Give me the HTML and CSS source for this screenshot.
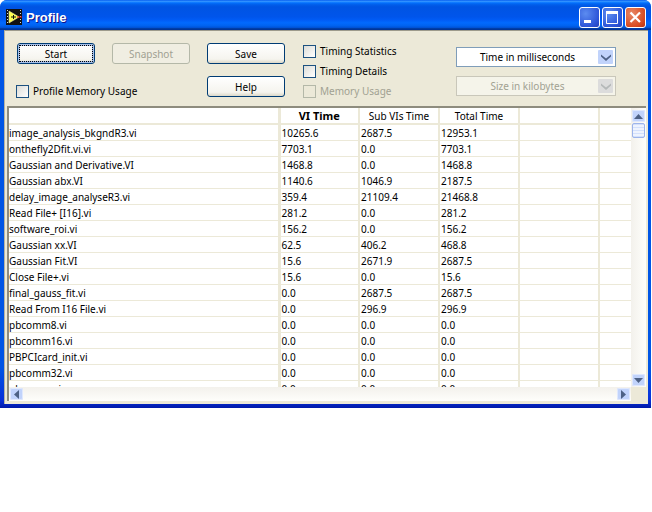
FILE: index.html
```html
<!DOCTYPE html>
<html lang="en">
<head>
    <meta charset="UTF-8">
    <title>Profile</title>
    <link rel="stylesheet" href="styles.css">
</head>
<body>
    <div class="window">
        <div class="titlebar">
            <svg class="app-icon" width="16" height="16" viewBox="0 0 16 16">
                <rect width="16" height="16" fill="#111"/>
                <path d="M1 1h1v1H1zM1 4h1v1H1zM1 7h1v1H1zM1 10h1v1H1zM1 13h1v1H1zM14 1h1v1h-1zM14 4h1v1h-1zM14 7h1v1h-1zM14 10h1v1h-1zM14 13h1v1h-1z" fill="#ddd"/>
                <path d="M3 2L13 8L3 14Z" fill="#ffff50" stroke="#e8e8a0" stroke-width="0.6"/>
                <path d="M5 8h5M7.500 6v4" stroke="#111" stroke-width="1"/>
                <path d="M11 8h5" stroke="#f01818" stroke-width="1"/>
            </svg>
            <span class="title">Profile</span>
            <div class="win-buttons">
                <div class="win-btn blue"><svg width="21" height="21" viewBox="0 0 21 21"><rect x="5" y="13" width="7" height="3" fill="#fff"/></svg></div>
                <div class="win-btn blue"><svg width="21" height="21" viewBox="0 0 21 21"><path d="M4.500 4.500h11v12h-11z" fill="none" stroke="#fff"/><rect x="4" y="4" width="12" height="3" fill="#fff"/></svg></div>
                <div class="win-btn red"><svg width="21" height="21" viewBox="0 0 21 21"><path d="M5.500 5.500L15 15M15 5.500L5.500 15" stroke="#fff" stroke-width="2.200"/></svg></div>
            </div>
        </div>
        <div class="content">
            <div class="toolbar">
                <div class="col-start">
                    <div class="btn-row">
                        <button class="btn focused">Start</button>
                        <button class="btn disabled">Snapshot</button>
                    </div>
                    <label class="check"><span class="box"></span>Profile Memory Usage</label>
                </div>
                <div class="col-save">
                    <button class="btn">Save</button>
                    <button class="btn">Help</button>
                </div>
                <div class="col-checks">
                    <label class="check"><span class="box"></span>Timing Statistics</label>
                    <label class="check"><span class="box"></span>Timing Details</label>
                    <label class="check disabled"><span class="box"></span>Memory Usage</label>
                </div>
                <div class="col-selects">
                    <div class="select"><span class="select-text">Time in milliseconds</span><span class="drop"><svg width="10" height="7" viewBox="0 0 10 7"><path d="M0 0.500L5 4.500L10 0.500V2.500L5 7L0 2.500Z" fill="#4d6185"/></svg></span></div>
                    <div class="select disabled"><span class="select-text">Size in kilobytes</span><span class="drop"><svg width="10" height="7" viewBox="0 0 10 7"><path d="M0 0.500L5 4.500L10 0.500V2.500L5 7L0 2.500Z" fill="#b4b8b8"/></svg></span></div>
                </div>
            </div>
            <div class="panel">
                <div class="table-row">
                    <div class="table-clip">
                        <table class="grid">
                            <colgroup><col class="c-name"><col class="c-num"><col class="c-num"><col class="c-num"><col class="c-num"><col class="c-num"></colgroup>
                            <thead>
                                <tr><th></th><th class="strong">VI Time</th><th>Sub VIs Time</th><th>Total Time</th><th></th><th></th></tr>
                            </thead>
                            <tbody>
                                <tr><td>image_analysis_bkgndR3.vi</td><td>10265.6</td><td>2687.5</td><td>12953.1</td><td></td><td></td></tr>
                                <tr><td>onthefly2Dfit.vi.vi</td><td>7703.1</td><td>0.0</td><td>7703.1</td><td></td><td></td></tr>
                                <tr><td>Gaussian and Derivative.VI</td><td>1468.8</td><td>0.0</td><td>1468.8</td><td></td><td></td></tr>
                                <tr><td>Gaussian abx.VI</td><td>1140.6</td><td>1046.9</td><td>2187.5</td><td></td><td></td></tr>
                                <tr><td>delay_image_analyseR3.vi</td><td>359.4</td><td>21109.4</td><td>21468.8</td><td></td><td></td></tr>
                                <tr><td>Read File+ [I16].vi</td><td>281.2</td><td>0.0</td><td>281.2</td><td></td><td></td></tr>
                                <tr><td>software_roi.vi</td><td>156.2</td><td>0.0</td><td>156.2</td><td></td><td></td></tr>
                                <tr><td>Gaussian xx.VI</td><td>62.5</td><td>406.2</td><td>468.8</td><td></td><td></td></tr>
                                <tr><td>Gaussian Fit.VI</td><td>15.6</td><td>2671.9</td><td>2687.5</td><td></td><td></td></tr>
                                <tr><td>Close File+.vi</td><td>15.6</td><td>0.0</td><td>15.6</td><td></td><td></td></tr>
                                <tr><td>final_gauss_fit.vi</td><td>0.0</td><td>2687.5</td><td>2687.5</td><td></td><td></td></tr>
                                <tr><td>Read From I16 File.vi</td><td>0.0</td><td>296.9</td><td>296.9</td><td></td><td></td></tr>
                                <tr><td>pbcomm8.vi</td><td>0.0</td><td>0.0</td><td>0.0</td><td></td><td></td></tr>
                                <tr><td>pbcomm16.vi</td><td>0.0</td><td>0.0</td><td>0.0</td><td></td><td></td></tr>
                                <tr><td>PBPCIcard_init.vi</td><td>0.0</td><td>0.0</td><td>0.0</td><td></td><td></td></tr>
                                <tr><td>pbcomm32.vi</td><td>0.0</td><td>0.0</td><td>0.0</td><td></td><td></td></tr>
                                <tr><td>pbcomm.vi</td><td>0.0</td><td>0.0</td><td>0.0</td><td></td><td></td></tr>
                            </tbody>
                        </table>
                    </div>
                    <div class="vscroll">
                        <span class="arrow"><svg width="9" height="5" viewBox="0 0 9 5"><path d="M4.500 0L9 5H0Z" fill="#4d6185"/></svg></span>
                        <span class="thumb"></span>
                        <span class="spacer"></span>
                        <span class="arrow"><svg width="9" height="5" viewBox="0 0 9 5"><path d="M4.500 5L9 0H0Z" fill="#4d6185"/></svg></span>
                    </div>
                </div>
                <div class="hscroll">
                    <span class="arrow"><svg width="5" height="9" viewBox="0 0 5 9"><path d="M0 4.500L5 0V9Z" fill="#4d6185"/></svg></span>
                    <span class="spacer"></span>
                    <span class="arrow"><svg width="5" height="9" viewBox="0 0 5 9"><path d="M5 4.500L0 0V9Z" fill="#4d6185"/></svg></span>
                    <span class="corner"></span>
                </div>
            </div>
        </div>
    </div>
</body>
</html>
```

FILE: styles.css
```css
body {
    margin: 0;
    background: #fff;
    font-family: 'Noto Sans', sans-serif;
    font-size: 10px;
    color: #000;
}

.window {
    width: 651px;
    height: 408px;
    box-sizing: border-box;
    display: flex;
    flex-direction: column;
    background: linear-gradient(to bottom, #0055e5 90%, #0831d9 98%, #0019a8);
    border-radius: 7px 7px 0 0;
    overflow: hidden;
}

/* Title bar */
.titlebar {
    height: 30px;
    flex: none;
    box-sizing: border-box;
    display: flex;
    align-items: center;
    padding: 4px 5px 0 6px;
    background: linear-gradient(to bottom, #0058ee 0%, #3593ff 4%, #288eff 6%, #127dff 8%, #036ffc 10%, #0262ee 14%, #0057e5 20%, #0054e3 24%, #0055eb 56%, #005bf5 66%, #026afe 76%, #0062ef 86%, #0052d6 92%, #0040ab 94%, #003092 100%);
}

.app-icon {
    flex: none;
}

.title {
    margin-left: 4px;
    font-family: 'Liberation Sans', sans-serif;
    font-size: 13px;
    font-weight: bold;
    color: #fff;
    text-shadow: 1px 1px 0 #0f1089;
}

.win-buttons {
    margin-left: auto;
    display: flex;
    gap: 2px;
}

.win-btn {
    width: 21px;
    height: 21px;
    box-sizing: border-box;
    border: 1px solid #fff;
    border-radius: 3px;
    overflow: hidden;
}

.win-btn svg {
    display: block;
    margin: -1px;
}

.win-btn.blue {
    background: radial-gradient(circle at 30% 30%, #5c8cf0, #2c55d8 70%, #2440b8);
}

.win-btn.red {
    background: radial-gradient(circle at 30% 30%, #e88a68, #d84a20 70%, #b83210);
}

/* Main area */
.content {
    flex: 1;
    min-height: 0;
    margin: 0 3px 4px 4px;
    display: flex;
    flex-direction: column;
    box-sizing: border-box;
    border-top: 1px solid #9d9b8c;
    border-left: 1px solid #b5b3a3;
    background: #ece9d8;
}

.toolbar {
    height: 75px;
    flex: none;
    box-sizing: border-box;
    display: flex;
    padding-top: 12px;
}

.col-start {
    width: 202px;
    padding-left: 11px;
    box-sizing: border-box;
}

.btn-row {
    display: flex;
    gap: 17px;
    margin-left: 1px;
    margin-bottom: 21px;
}

.btn {
    width: 78px;
    height: 21px;
    box-sizing: border-box;
    padding: 0;
    border: 1px solid #003c74;
    border-radius: 3px;
    background: linear-gradient(to bottom, #fff, #f5f4ee 80%, #dcd8c8);
    font-family: inherit;
    font-size: 10px;
    color: #000;
}

.btn.focused {
    outline: 1px dotted #000;
    outline-offset: -3px;
    box-shadow: inset 0 0 0 2px #a8c0e8;
}

.btn.disabled {
    border-color: #b4b8a8;
    background: #f0eee2;
    color: #a1a192;
}

.col-save {
    width: 96px;
    display: flex;
    flex-direction: column;
    gap: 12px;
}

.col-checks {
    width: 153px;
    display: flex;
    flex-direction: column;
    gap: 7px;
    padding-top: 2px;
}

.check {
    display: flex;
    align-items: center;
    gap: 4px;
    height: 13px;
    line-height: 11px;
}

.box {
    width: 13px;
    height: 13px;
    flex: none;
    box-sizing: border-box;
    border: 1px solid #1c5180;
    background: linear-gradient(135deg, #dcdcd7, #fff);
}

.check.disabled {
    color: #a1a192;
}

.check.disabled .box {
    border-color: #b4b8a8;
    background: #ece9d8;
}

.col-selects {
    width: 160px;
    display: flex;
    flex-direction: column;
    gap: 9px;
    padding-top: 4px;
}

.select {
    height: 20px;
    box-sizing: border-box;
    display: flex;
    align-items: center;
    border: 1px solid #7f9db9;
    background: #fff;
}

.select-text {
    flex: 1;
    text-align: center;
}

.drop {
    width: 15px;
    height: 14px;
    margin-right: 2px;
    display: flex;
    align-items: center;
    justify-content: center;
    background: #c1d3fb;
    border-radius: 1px;
}

.select.disabled {
    border-color: #c9c7ba;
    background: #f5f4ea;
    color: #a1a192;
}

.select.disabled .drop {
    background: #dcdcdc;
}

/* Results table */
.panel {
    flex: 1;
    min-height: 0;
    margin: 0 2px 3px 2px;
    display: flex;
    flex-direction: column;
    border-top: 2px solid #8e8c7e;
    border-left: 2px solid #8e8c7e;
    background: #fff;
}

.table-row {
    flex: 1;
    min-height: 0;
    display: flex;
}

.table-clip {
    flex: 1;
    min-width: 0;
    overflow: hidden;
}

.grid {
    width: 622px;
    table-layout: fixed;
    border-collapse: collapse;
    border-spacing: 0;
}

.c-name {
    width: 270px;
}

.c-num {
    width: 80px;
}

.grid th {
    height: 15px;
    padding: 0;
    font-weight: normal;
    border-right: 2px solid #ece9d8;
    border-bottom: 2px solid #ece9d8;
    overflow: hidden;
}

.grid th.strong {
    font-size: 11px;
    font-weight: bold;
}

.grid td {
    height: 15px;
    padding: 0 0 0 1px;
    border-right: 2px solid #ece9d8;
    border-bottom: 1px solid #ece9d8;
    white-space: nowrap;
    overflow: hidden;
}

.grid td:first-child {
    padding-left: 0;
}

.grid td:first-child,
.grid th:first-child {
    border-right-width: 3px;
}

.vscroll {
    width: 15px;
    flex: none;
    box-sizing: border-box;
    padding: 2px 1px 1px;
    display: flex;
    flex-direction: column;
    background: linear-gradient(to right, #f3f1ec, #fefefb);
}

.vscroll .spacer,
.hscroll .spacer {
    flex: 1;
}

.arrow {
    width: 13px;
    height: 12px;
    flex: none;
    box-sizing: border-box;
    display: flex;
    align-items: center;
    justify-content: center;
    border-radius: 2px;
    background: #c1d3fb;
    box-shadow: inset 0 0 0 1px #dfe8fd;
}

.thumb {
    height: 15px;
    flex: none;
    margin-top: 1px;
    box-sizing: border-box;
    border: 1px solid #9db4ea;
    border-radius: 2px;
    background: repeating-linear-gradient(to bottom, #d3e0fc 0, #d3e0fc 1px, #eef3fe 1px, #eef3fe 3px);
}

.hscroll {
    height: 14px;
    flex: none;
    box-sizing: border-box;
    padding: 1px 0 1px 1px;
    display: flex;
    background: linear-gradient(to bottom, #f3f1ec, #fefefb);
}

.corner {
    width: 15px;
    flex: none;
    margin: -1px 0 -1px 1px;
    background: #ece9d8;
}
```
